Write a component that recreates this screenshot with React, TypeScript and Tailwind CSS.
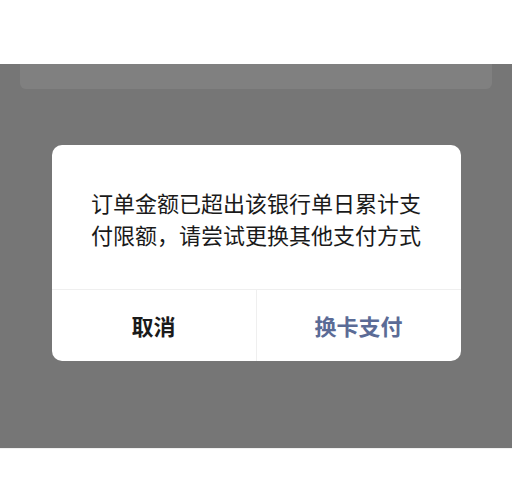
export default function App() {
  return (
    <div
      className="w-[512px] h-[500px] bg-white flex flex-col"
      style={{ fontFamily: '"Noto Sans CJK SC", "Noto Sans", sans-serif' }}
    >
      <div className="h-16 bg-white" />
      <div className="h-[384px] bg-[#767676] flex flex-col">
        <div className="mx-5 h-[25px] bg-[#808080] rounded-b-md" />
        <div className="flex justify-center pt-[56px]">
          <div className="w-[409px] bg-white rounded-[10px] flex flex-col">
            <div className="h-[144px] px-9 flex items-center justify-center pt-[2px]">
              <p className="text-[22px] leading-[32px] text-[#1a1a1a] text-center">
                订单金额已超出该银行单日累计支付限额，请尝试更换其他支付方式
              </p>
            </div>
            <div className="h-[72px] border-t border-[#efefef] flex">
              <div className="flex-1 flex items-center justify-center border-r border-[#efefef] text-[22px] font-bold text-[#1a1a1a]">
                取消
              </div>
              <div className="flex-1 flex items-center justify-center text-[22px] font-bold text-[#5b6b96]">
                换卡支付
              </div>
            </div>
          </div>
        </div>
      </div>
      <div className="flex-1 bg-white border-t border-[#f0f0f0]" />
    </div>
  );
}
